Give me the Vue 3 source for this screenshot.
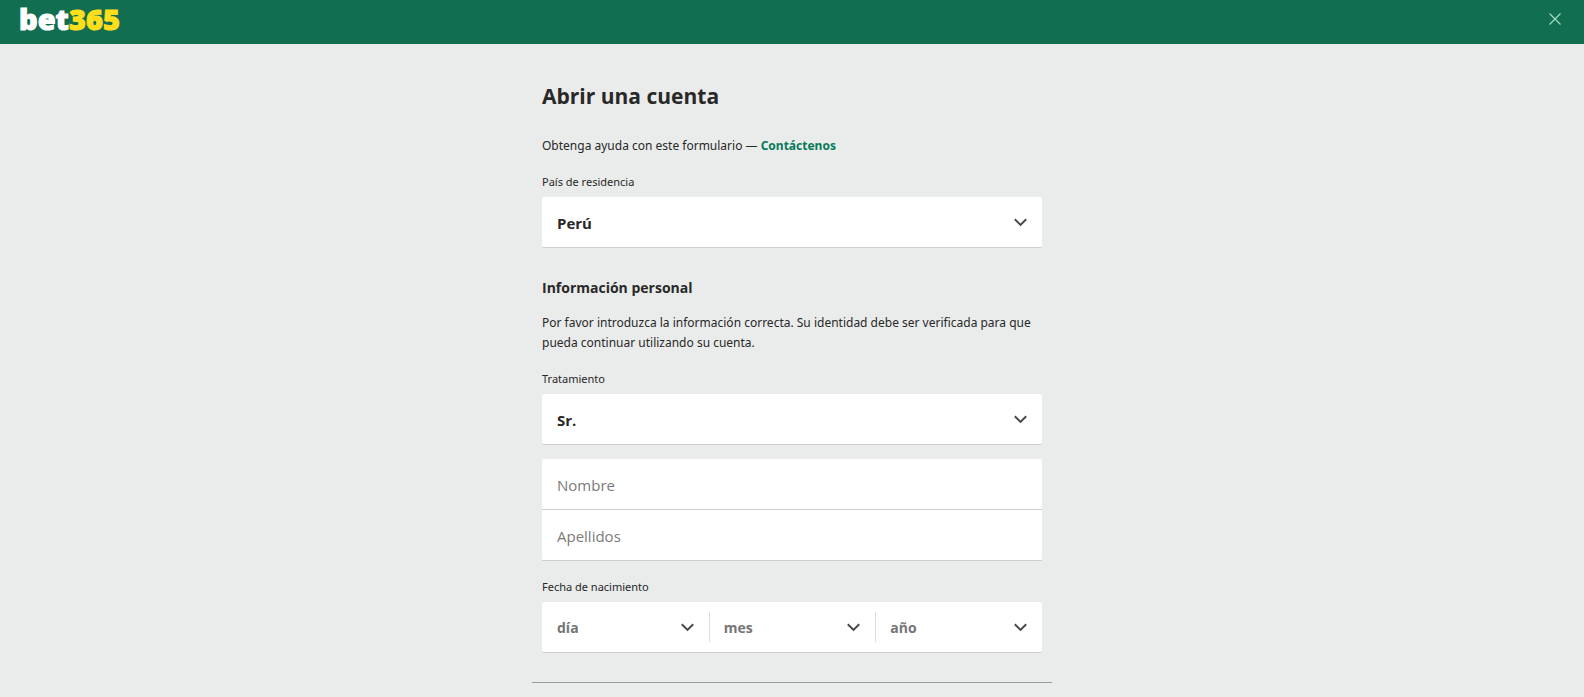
<script setup>
import { ref } from 'vue'

const country = ref('Perú')
const title = ref('Sr.')
const firstName = ref('')
const lastName = ref('')

const months = ['enero', 'febrero', 'marzo', 'abril', 'mayo', 'junio', 'julio', 'agosto', 'septiembre', 'octubre', 'noviembre', 'diciembre']
const dateParts = ref([
  { id: 'day', label: 'día', value: '', options: Array.from({ length: 31 }, (_, i) => i + 1) },
  { id: 'month', label: 'mes', value: '', options: months },
  { id: 'year', label: 'año', value: '', options: Array.from({ length: 90 }, (_, i) => 2005 - i) },
])
</script>

<template>
  <div class="page">
    <header class="bar">
      <a class="logo" href="#" aria-label="bet365">bet<span class="digits">365</span></a>
      <button class="close" type="button" aria-label="Cerrar">
        <svg width="12" height="12" viewBox="0 0 12 12" aria-hidden="true">
          <path d="M0.5 0.5 11.5 11.5M11.5 0.5 0.5 11.5" />
        </svg>
      </button>
    </header>

    <main class="content">
      <form class="form" @submit.prevent>
        <h1>Abrir una cuenta</h1>
        <p class="help">Obtenga ayuda con este formulario — <a href="#">Contáctenos</a></p>

        <label class="caption" for="country">País de residencia</label>
        <div class="box">
          <select id="country" v-model="country">
            <option>Perú</option>
            <option>Chile</option>
            <option>México</option>
          </select>
          <svg class="chevron" width="13" height="9" viewBox="0 0 13 9" aria-hidden="true"><path d="M0.8 1.2 6.5 6.9 12.2 1.2" /></svg>
        </div>

        <h2>Información personal</h2>
        <p class="note">Por favor introduzca la información correcta. Su identidad debe ser verificada para que pueda continuar utilizando su cuenta.</p>

        <label class="caption" for="title">Tratamiento</label>
        <div class="box">
          <select id="title" v-model="title">
            <option>Sr.</option>
            <option>Sra.</option>
            <option>Srta.</option>
          </select>
          <svg class="chevron" width="13" height="9" viewBox="0 0 13 9" aria-hidden="true"><path d="M0.8 1.2 6.5 6.9 12.2 1.2" /></svg>
        </div>

        <div class="names">
          <input v-model="firstName" type="text" placeholder="Nombre" aria-label="Nombre" />
          <input v-model="lastName" type="text" placeholder="Apellidos" aria-label="Apellidos" />
        </div>

        <label class="caption" for="day">Fecha de nacimiento</label>
        <div class="box date">
          <div v-for="part in dateParts" :key="part.id" class="part">
            <select :id="part.id" v-model="part.value" :aria-label="part.label">
              <option value="">{{ part.label }}</option>
              <option v-for="option in part.options" :key="option">{{ option }}</option>
            </select>
            <svg class="chevron" width="13" height="9" viewBox="0 0 13 9" aria-hidden="true"><path d="M0.8 1.2 6.5 6.9 12.2 1.2" /></svg>
          </div>
        </div>
      </form>
      <hr />
    </main>
  </div>
</template>

<style>
body {
  background: #eaeceb;
}
</style>

<style scoped>
.page {
  font-family: "Open Sans", "Noto Sans", sans-serif;
  font-size: 12px;
  line-height: 20px;
  color: #282828;
}

.bar {
  display: flex;
  align-items: center;
  justify-content: space-between;
  box-sizing: border-box;
  height: 44px;
  padding: 0 16px 6px 19px;
  background: #126e51;
}

.logo {
  font-size: 29px;
  font-weight: 800;
  line-height: 34px;
  color: #fff;
  text-decoration: none;
  -webkit-text-stroke: 1px currentColor;
}

.digits {
  color: #ffdf1b;
}

.close {
  display: flex;
  padding: 7px;
  border: 0;
  background: none;
  cursor: pointer;
}

.close path {
  fill: none;
  stroke: #a3dcc4;
  stroke-width: 1.2;
}

.content {
  max-width: 520px;
  margin: 0 auto;
  padding: 36px 0 14px;
}

.form {
  padding: 0 10px;
}

h1 {
  margin: 0 0 24px;
  font-size: 21px;
  line-height: 32px;
  font-weight: 700;
}

p {
  margin: 0;
  font-family: "Noto Sans", "Open Sans", sans-serif;
}

.help a {
  color: #057a5a;
  font-weight: 700;
  text-decoration: none;
}

h2 {
  margin: 30px 0 15px;
  font-size: 14px;
  line-height: 20px;
  font-weight: 700;
}

.caption {
  display: block;
  margin: 16px 0 5px;
  font-family: "Noto Sans", "Open Sans", sans-serif;
  font-size: 11px;
}

.box,
.names {
  background: #fff;
  border-radius: 2px;
}

.box {
  position: relative;
  border-bottom: 1px solid #cdcfce;
}

select,
input {
  display: block;
  box-sizing: border-box;
  width: 100%;
  height: 50px;
  margin: 0;
  padding: 2px 15px 0;
  border: 0;
  background: none;
  font-family: inherit;
  font-size: 15px;
  color: #282828;
  appearance: none;
}

select {
  font-weight: 700;
}

.chevron {
  position: absolute;
  top: 21px;
  right: 15px;
  pointer-events: none;
}

.chevron path {
  fill: none;
  stroke: #484848;
  stroke-width: 2;
}

.names {
  margin-top: 14px;
}

.names input {
  height: 51px;
  border-bottom: 1px solid #cdcfce;
}

.names input::placeholder {
  color: #7a7a7a;
  opacity: 1;
}

.date {
  display: grid;
  grid-template-columns: repeat(3, 1fr);
}

.part {
  position: relative;
}

.part + .part::before {
  content: "";
  position: absolute;
  top: 10px;
  left: 0;
  width: 1px;
  height: 30px;
  background: #dcdedd;
}

.part select {
  padding-top: 0;
  font-size: 14px;
  color: #757575;
}

hr {
  height: 1px;
  margin: 29px 0 0;
  border: 0;
  background: #999b9a;
}
</style>
